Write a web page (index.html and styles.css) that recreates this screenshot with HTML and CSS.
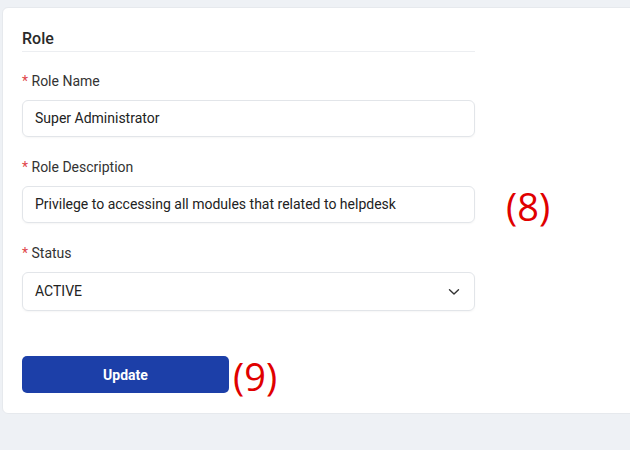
FILE: index.html
```html
<!DOCTYPE html>
<html>
<head>
<meta charset="utf-8">
<link rel="stylesheet" href="styles.css">
</head>
<body>
<div class="card">
  <div class="form">
    <div class="title">Role</div>
    <div class="field">
      <div class="label"><span class="req">*</span> Role Name</div>
      <div class="row">
        <div class="input">Super Administrator</div>
      </div>
    </div>
    <div class="field">
      <div class="label"><span class="req">*</span> Role Description</div>
      <div class="row">
        <div class="input">Privilege to accessing all modules that related to helpdesk</div>
        <span class="note note8">(8)</span>
      </div>
    </div>
    <div class="field">
      <div class="label"><span class="req">*</span> Status</div>
      <div class="row">
        <div class="input select">
          <span>ACTIVE</span>
          <svg class="chev" width="12" height="8" viewBox="0 0 12 8"><path d="M1.5 1.8 L6 6 L10.5 1.8" fill="none" stroke="#333" stroke-width="1.4" stroke-linecap="round" stroke-linejoin="round"/></svg>
        </div>
      </div>
    </div>
    <div class="actions">
      <button class="btn">Update</button>
      <span class="note note9">(9)</span>
    </div>
  </div>
</div>
</body>
</html>
```
FILE: styles.css
```css
html, body {
  margin: 0;
  padding: 0;
  background: #eef1f5;
  font-family: Roboto, "Liberation Sans", sans-serif;
  color: #222;
}
.card {
  margin: 7px 0 0 2px;
  width: 660px;
  height: 407px;
  box-sizing: border-box;
  background: #fff;
  border: 1px solid #e6e9ed;
  border-radius: 6px;
  padding: 19px 20px 0 19px;
}
.form {
  width: 453px;
}
.title {
  font-size: 16px;
  font-weight: 500;
  line-height: 24px;
  color: #2a2a2a;
  border-bottom: 1px solid #eceef1;
  height: 24px;
}
.field {
  margin-top: 19px;
}
.field + .field {
  margin-top: 20px;
}
.label {
  font-size: 14px;
  line-height: 20px;
  color: #333;
  margin-bottom: 9px;
}
.req {
  color: #e0464a;
}
.row {
  display: flex;
  align-items: center;
}
.input {
  flex: 0 0 453px;
  box-sizing: border-box;
  height: 37px;
  border: 1px solid #e2e5e9;
  border-radius: 6px;
  box-shadow: 0 1px 2px rgba(0,0,0,0.04);
  padding: 0 12px;
  font-size: 14px;
  line-height: 35px;
  color: #222;
  white-space: nowrap;
}
.select {
  height: 39px;
  line-height: 37px;
  display: flex;
  align-items: center;
  justify-content: space-between;
  padding-right: 14px;
}
.note {
  font-family: "Open Sans", "Noto Sans", sans-serif;
  color: #e00000;
  font-size: 38px;
  height: 37px;
  line-height: 40px;
}
.note8 {
  margin-left: 31px;
}
.actions {
  margin-top: 45px;
  display: flex;
  align-items: center;
}
.btn {
  width: 207px;
  height: 37px;
  border: none;
  border-radius: 5px;
  background: #1c3fa8;
  color: #fff;
  font-family: Roboto, "Liberation Sans", sans-serif;
  font-weight: 700;
  font-size: 14px;
  padding: 0;
}
.note9 {
  margin-left: 4px;
}
```
